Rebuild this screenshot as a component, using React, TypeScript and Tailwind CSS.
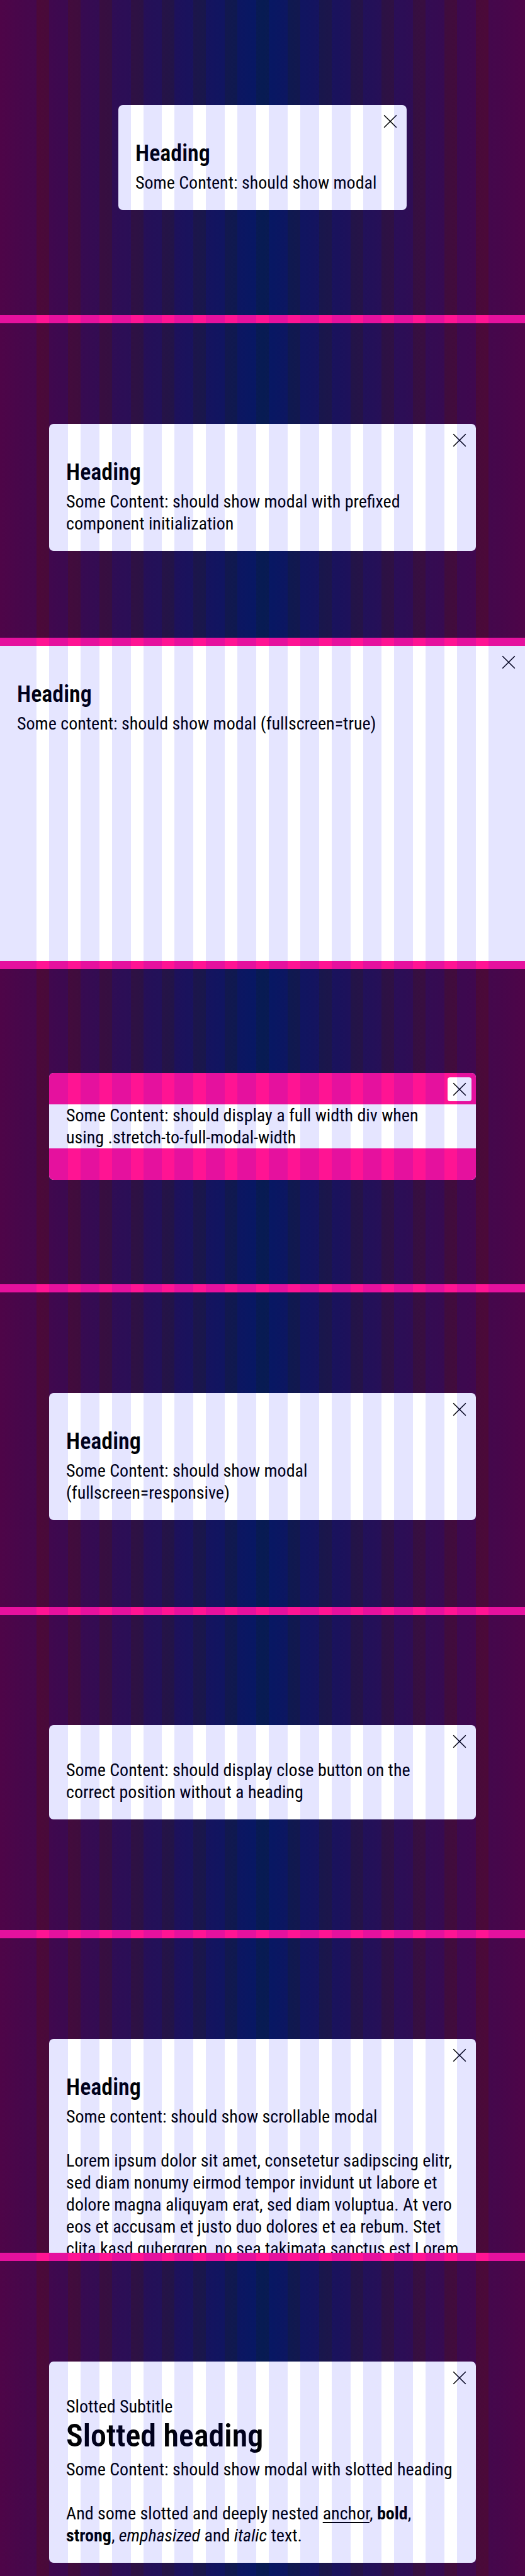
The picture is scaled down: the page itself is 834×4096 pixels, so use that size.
import type { ReactNode } from 'react';

const columns = Array.from({ length: 14 }, (_, i) => i);

function ColumnOverlay() {
  return (
    <div aria-hidden="true" className="pointer-events-none absolute inset-0 z-10 flex gap-5">
      <div className="w-[58px] bg-[#0000ff]/10" />
      {columns.map((c) => (
        <div key={c} className="flex-1 bg-[#0000ff]/10" />
      ))}
      <div className="w-[58px] bg-[#0000ff]/10" />
    </div>
  );
}

function CloseButton() {
  return (
    <button
      type="button"
      aria-label="Close modal"
      className="absolute top-[7px] right-[7px] flex size-[38px] items-center justify-center rounded bg-white"
    >
      <svg viewBox="0 0 22 22" className="size-[22px]" fill="none" stroke="#010205" strokeWidth="1.5">
        <path d="M1.2 1.2 20.8 20.8M20.8 1.2 1.2 20.8" />
      </svg>
    </button>
  );
}

function Heading({ children }: { children: ReactNode }) {
  return <h2 className="mb-1.5 text-[36px] leading-[46px] font-semibold">{children}</h2>;
}

function Stage({ children }: { children: ReactNode }) {
  return (
    <section className="flex min-h-0 flex-1 flex-col items-center overflow-hidden bg-[linear-gradient(to_right,#570634,#071b53,#570634)] px-[78px]">
      <div className="min-h-[160px] flex-1" />
      {children}
      <div className="flex-1" />
    </section>
  );
}

function Modal({ children, compact = false }: { children: ReactNode; compact?: boolean }) {
  return (
    <div
      role="dialog"
      className={
        compact
          ? 'relative min-w-[458px] shrink-0 overflow-hidden rounded-[7px] bg-white px-[27px] pt-[54px] pb-[26px]'
          : 'relative w-full shrink-0 overflow-hidden rounded-[7px] bg-white px-[27px] pt-[54px] pb-[26px]'
      }
    >
      {children}
      <CloseButton />
    </div>
  );
}

function Divider() {
  return <div className="h-[13px] shrink-0 bg-[#ff1493]" />;
}

export default function App() {
  return (
    <main className="relative flex h-screen flex-col font-['Roboto_Condensed',Roboto,sans-serif] text-[28px] leading-[35px] font-normal whitespace-nowrap text-[#010205]">
      <Stage>
        <Modal compact>
          <Heading>Heading</Heading>
          <p>Some Content: should show modal</p>
        </Modal>
      </Stage>
      <Divider />

      <Stage>
        <Modal>
          <Heading>Heading</Heading>
          <p>
            Some Content: should show modal with prefixed
            <br />
            component initialization
          </p>
        </Modal>
      </Stage>
      <Divider />

      <section className="min-h-0 flex-1 bg-white">
        <div role="dialog" className="relative h-full px-[27px] pt-[54px]">
          <Heading>Heading</Heading>
          <p>Some content: should show modal (fullscreen=true)</p>
          <CloseButton />
        </div>
      </section>
      <Divider />

      <Stage>
        <div role="dialog" className="relative w-full shrink-0 overflow-hidden rounded-[7px] bg-white">
          <div className="h-[50px] bg-[#ff1493]" />
          <p className="px-[27px]">
            Some Content: should display a full width div when
            <br />
            using .stretch-to-full-modal-width
          </p>
          <div className="h-[50px] bg-[#ff1493]" />
          <CloseButton />
        </div>
      </Stage>
      <Divider />

      <Stage>
        <Modal>
          <Heading>Heading</Heading>
          <p>
            Some Content: should show modal
            <br />
            (fullscreen=responsive)
          </p>
        </Modal>
      </Stage>
      <Divider />

      <Stage>
        <Modal>
          <p>
            Some Content: should display close button on the
            <br />
            correct position without a heading
          </p>
        </Modal>
      </Stage>
      <Divider />

      <Stage>
        <Modal>
          <Heading>Heading</Heading>
          <p className="mb-[35px]">Some content: should show scrollable modal</p>
          <p>
            Lorem ipsum dolor sit amet, consetetur sadipscing elitr,
            <br />
            sed diam nonumy eirmod tempor invidunt ut labore et
            <br />
            dolore magna aliquyam erat, sed diam voluptua. At vero
            <br />
            eos et accusam et justo duo dolores et ea rebum. Stet
            <br />
            clita kasd gubergren, no sea takimata sanctus est Lorem
          </p>
        </Modal>
      </Stage>
      <Divider />

      <Stage>
        <Modal>
          <p>Slotted Subtitle</p>
          <h2 className="mb-1.5 text-[50px] leading-[59px] font-semibold">Slotted heading</h2>
          <p className="mb-[35px]">Some Content: should show modal with slotted heading</p>
          <p>
            And some slotted and deeply nested{' '}
            <a href="#anchor" className="underline decoration-2 underline-offset-4">
              anchor
            </a>
            , <b className="font-bold">bold</b>,
            <br />
            <strong className="font-bold">strong</strong>, <em>emphasized</em> and <i>italic</i> text.
          </p>
        </Modal>
      </Stage>

      <ColumnOverlay />
    </main>
  );
}
